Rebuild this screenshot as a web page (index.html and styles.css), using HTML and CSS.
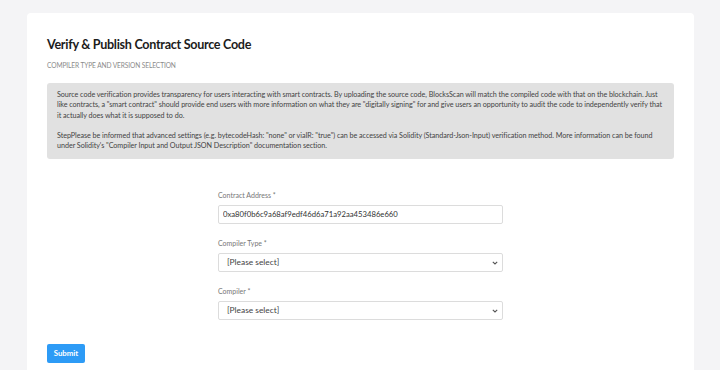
FILE: index.html
```html
<!DOCTYPE html>
<html lang="en">
<head>
    <meta charset="UTF-8">
    <meta name="viewport" content="width=device-width, initial-scale=1.0">
    <title>Verify &amp; Publish Contract Source Code</title>
    <link rel="stylesheet" href="styles.css">
</head>
<body>
    <div class="page">
        <div class="card">
            <h1 class="title">Verify &amp; Publish Contract Source Code</h1>
            <p class="subtitle">COMPILER TYPE AND VERSION SELECTION</p>

            <div class="info">
                <p>Source code verification provides transparency for users interacting with smart contracts. By uploading the source code, BlocksScan will match the compiled code with that on the blockchain. Just like contracts, a "smart contract" should provide end users with more information on what they are "digitally signing" for and give users an opportunity to audit the code to independently verify that it actually does what it is supposed to do.</p>
                <p>StepPlease be informed that advanced settings (e.g. bytecodeHash: "none" or viaIR: "true") can be accessed via Solidity (Standard-Json-Input) verification method. More information can be found under Solidity's "Compiler Input and Output JSON Description" documentation section.</p>
            </div>

            <form class="form">
                <div class="field">
                    <label>Contract Address *</label>
                    <input type="text" class="control" value="0xa80f0b6c9a68af9edf46d6a71a92aa453486e660">
                </div>
                <div class="field">
                    <label>Compiler Type *</label>
                    <div class="select-wrap">
                        <select class="control select">
                            <option>[Please select]</option>
                        </select>
                        <svg class="chev" width="6" height="4" viewBox="0 0 6 4"><path d="M0.8 0.8 L3 3 L5.2 0.8" fill="none" stroke="#555" stroke-width="1.1"/></svg>
                    </div>
                </div>
                <div class="field">
                    <label>Compiler *</label>
                    <div class="select-wrap">
                        <select class="control select">
                            <option>[Please select]</option>
                        </select>
                        <svg class="chev" width="6" height="4" viewBox="0 0 6 4"><path d="M0.8 0.8 L3 3 L5.2 0.8" fill="none" stroke="#555" stroke-width="1.1"/></svg>
                    </div>
                </div>
            </form>

            <button class="submit">Submit</button>
        </div>
    </div>
</body>
</html>
```

FILE: styles.css
```css
body{
    margin:0;
    background:#f4f4f6;
    font-family: Lato, "Open Sans", sans-serif;
}

.page{
    padding:13px 26px 0 27px;
}

.card{
    background:#fff;
    border-radius:4px;
    padding:23px 20px 20px 20px;
    min-height:340px;
    box-sizing:border-box;
}

.title{
    margin:0;
    font-size:12.6px;
    font-weight:700;
    letter-spacing:-0.3px;
    color:#1c1c1c;
    line-height:18px;
}

.subtitle{
    margin:5px 0 0 0;
    font-size:6.6px;
    letter-spacing:-0.1px;
    color:#8a8a8a;
    line-height:12px;
}

.info{
    margin-top:12px;
    background:#e1e1e1;
    border-radius:3px;
    padding:7px 9px 7px 10px;
    font-size:7.2px;
    letter-spacing:-0.05px;
    line-height:10.3px;
    color:#444;
}

.info p{
    margin:0;
}

.info p + p{
    margin-top:10.3px;
}

.form{
    width:285px;
    margin:31px auto 0 auto;
}

.field{
    margin-bottom:14px;
}

.field label{
    display:block;
    font-size:7px;
    color:#777;
    line-height:10px;
    margin-bottom:5px;
}

.control{
    display:block;
    width:100%;
    height:19px;
    box-sizing:border-box;
    border:1px solid #dcdcdc;
    border-radius:2px;
    background:#fff;
    padding:0 4px;
    font-family:inherit;
    font-size:7.7px;
    color:#333;
    outline:none;
}

.select-wrap{
    position:relative;
}

.select{
    -webkit-appearance:none;
    appearance:none;
    padding:0 8px;
    font-size:8.4px;
    color:#444;
}

.chev{
    position:absolute;
    right:5px;
    top:8px;
}

.submit{
    margin-top:10px;
    background:#2d9bf6;
    color:#fff;
    border:none;
    border-radius:2px;
    font-family:inherit;
    font-size:7.8px;
    font-weight:700;
    width:38px;
    height:19px;
    padding:0;
}
```
